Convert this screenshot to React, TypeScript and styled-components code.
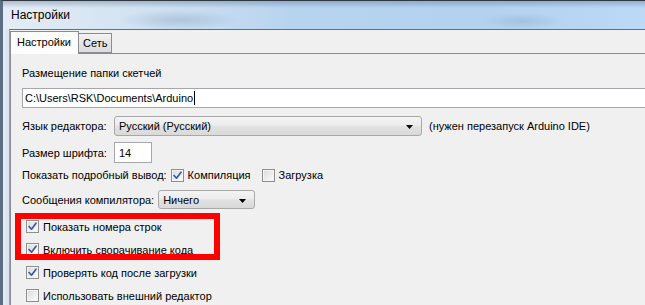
import React from "react";
import styled, {createGlobalStyle} from "styled-components";

const GlobalStyle = createGlobalStyle`
    html, body {
        margin: 0;
        padding: 0;
        background: #f0f0f0;
    }
    body {
        font-family: "Liberation Sans", Arial, sans-serif;
        font-size: 11px;
        color: #000;
    }
`

const CheckMark: React.FunctionComponent = () => (
    <svg width="11" height="11" viewBox="0 0 11 11">
        <path d="M2 5.5 L4.5 8.2 L9 2.2" fill="none" stroke="#3f58a0" strokeWidth="1.7" strokeLinecap="round" strokeLinejoin="round"/>
    </svg>
)

const Arrow: React.FunctionComponent = () => (
    <svg width="7" height="4" viewBox="0 0 7 4">
        <path d="M0 0 H7 L3.5 4 Z" fill="#000"/>
    </svg>
)

const CheckBox: React.FunctionComponent<{checked?: boolean}> = ({checked}) => (
    <Box>{checked && <CheckMark/>}</Box>
)

export default function App() {
    return (
        <>
            <GlobalStyle/>
            <Window>
                <TitleBar>Настройки</TitleBar>
                <Body>
                    <Frame/>
                    <Client>
                        <TabStrip>
                            <Tab $active>Настройки</Tab>
                            <Tab>Сеть</Tab>
                        </TabStrip>
                        <Panel>
                            <SectionLabel>Размещение папки скетчей</SectionLabel>
                            <PathInput>
                                C:\Users\RSK\Documents\Arduino<Caret/>
                            </PathInput>
                            <Row $top={8} $height={20}>
                                <Label $width={92}>Язык редактора:</Label>
                                <Select $width={308}>
                                    Русский (Русский)
                                    <Arrow/>
                                </Select>
                                <Note>(нужен перезапуск Arduino IDE)</Note>
                            </Row>
                            <Row $top={6} $height={21}>
                                <Label $width={92}>Размер шрифта:</Label>
                                <SmallInput>14</SmallInput>
                            </Row>
                            <Row $top={2} $height={20}>
                                <Label>Показать подробный вывод:</Label>
                                <Inline $left={4}>
                                    <CheckBox checked/>
                                    Компиляция
                                </Inline>
                                <Inline $left={11}>
                                    <CheckBox/>
                                    Загрузка
                                </Inline>
                            </Row>
                            <Row $top={5} $height={19}>
                                <Label>Сообщения компилятора:</Label>
                                <Select $width={97} $left={4}>
                                    Ничего
                                    <Arrow/>
                                </Select>
                            </Row>
                            <CheckList>
                                <Highlight>
                                    <CheckRow>
                                        <CheckBox checked/>
                                        Показать номера строк
                                    </CheckRow>
                                    <CheckRow>
                                        <CheckBox checked/>
                                        Включить сворачивание кода
                                    </CheckRow>
                                </Highlight>
                                <CheckRow>
                                    <CheckBox checked/>
                                    Проверять код после загрузки
                                </CheckRow>
                                <CheckRow>
                                    <CheckBox/>
                                    Использовать внешний редактор
                                </CheckRow>
                            </CheckList>
                        </Panel>
                    </Client>
                </Body>
            </Window>
        </>
    )
}

const Window = styled.div`
    width: 645px;
    height: 305px;
    overflow: hidden;
    display: flex;
    flex-direction: column;
    background: #f0f0f0;
`
const TitleBar = styled.div`
    height: 29px;
    flex: none;
    box-sizing: border-box;
    display: flex;
    align-items: center;
    padding: 0 0 1px 8px;
    border-top: 1px solid #2f3742;
    border-left: 3px solid #5b6e84;
    font-size: 12px;
    color: #000;
    background:
        linear-gradient(to bottom, rgba(70, 95, 125, 0.35) 0, rgba(70, 95, 125, 0) 7px),
        radial-gradient(ellipse 60px 10px at 175px 19px, rgba(120, 150, 180, 0.35), rgba(120, 150, 180, 0)),
        radial-gradient(ellipse 40px 8px at 520px 20px, rgba(110, 140, 170, 0.25), rgba(110, 140, 170, 0)),
        linear-gradient(to right, #e4edf6 0, #d3e3f2 20%, #b7d4ef 45%, #b2d2f0 75%, #bcd9f6 100%);
`
const Body = styled.div`
    flex: 1;
    display: flex;
    flex-direction: row;
    min-height: 0;
`
const Frame = styled.div`
    width: 9px;
    flex: none;
    box-sizing: border-box;
    border-left: 3px solid #5b6e84;
    background: linear-gradient(to right, #e6edf4, #d6e2ee);
`
const Client = styled.div`
    flex: 1;
    display: flex;
    flex-direction: column;
    border-top: 1px solid #646f7b;
    border-left: 1px solid #9aa4ae;
    background: #f0f0f0;
    padding-top: 1px;
    min-width: 0;
`
const TabStrip = styled.div`
    display: flex;
    flex-direction: row;
    align-items: flex-end;
    height: 22px;
    position: relative;
    z-index: 1;
`
const Tab = styled.div<{$active?: boolean}>`
    box-sizing: border-box;
    height: ${({$active}) => $active ? 23 : 20}px;
    margin-bottom: ${({$active}) => $active ? -1 : 0}px;
    padding: ${({$active}) => $active ? "4px 7px 0 6px" : "3px 4px 0 4px"};
    border: 1px solid #898c95;
    border-bottom: ${({$active}) => $active ? "none" : "1px solid #898c95"};
    border-left: ${({$active}) => $active ? "1px solid #898c95" : "none"};
    background: ${({$active}) => $active ? "#fcfcfc" : "linear-gradient(to bottom, #f3f3f3, #e6e6e6 50%, #dcdcdc)"};
`
const Panel = styled.div`
    flex: 1;
    display: flex;
    flex-direction: column;
    border-top: 1px solid #898c95;
    border-left: 1px solid #898c95;
    padding: 9px 0 0 11px;
    min-width: 0;
`
const SectionLabel = styled.div`
    height: 20px;
    line-height: 20px;
`
const PathInput = styled.div`
    margin-top: 5px;
    width: 660px;
    height: 20px;
    box-sizing: border-box;
    border: 1px solid #a5a7ad;
    background: #fff;
    padding-left: 2px;
    display: flex;
    align-items: center;
    white-space: nowrap;
`
const Caret = styled.span`
    display: inline-block;
    width: 1px;
    height: 14px;
    background: #000;
    margin-left: 1px;
`
const Row = styled.div<{$top: number; $height: number}>`
    display: flex;
    flex-direction: row;
    align-items: center;
    margin-top: ${({$top}) => $top}px;
    height: ${({$height}) => $height}px;
    white-space: nowrap;
`
const Label = styled.span<{$width?: number}>`
    ${({$width}) => $width ? `width: ${$width}px;` : ""}
    flex: none;
`
const Select = styled.div<{$width: number; $left?: number}>`
    width: ${({$width}) => $width}px;
    height: 100%;
    margin-left: ${({$left}) => $left || 0}px;
    box-sizing: border-box;
    display: flex;
    align-items: center;
    justify-content: space-between;
    padding: 0 8px 0 4px;
    border: 1px solid #a8a8a8;
    border-radius: 3px;
    background: linear-gradient(to bottom, #f4f4f4 0, #ececec 45%, #e1e1e1 55%, #d9d9d9 100%);
    svg {
        margin-top: 2px;
    }
`
const Note = styled.span`
    margin-left: 7px;
`
const SmallInput = styled.div`
    width: 38px;
    height: 100%;
    box-sizing: border-box;
    border: 1px solid #a5a7ad;
    background: #fff;
    padding-left: 4px;
    display: flex;
    align-items: center;
`
const Inline = styled.span<{$left: number}>`
    display: flex;
    flex-direction: row;
    align-items: center;
    gap: 4px;
    margin-left: ${({$left}) => $left}px;
`
const Box = styled.span`
    width: 13px;
    height: 13px;
    flex: none;
    box-sizing: border-box;
    border: 1px solid #8e8f8f;
    box-shadow: inset 0 0 0 1px #f4f4f4;
    background: linear-gradient(135deg, #d9d9d9, #f7f7f7 80%);
    display: flex;
    align-items: center;
    justify-content: center;
`
const CheckList = styled.div`
    display: flex;
    flex-direction: column;
    margin-top: 6px;
`
const Highlight = styled.div`
    position: relative;
    display: flex;
    flex-direction: column;
    &::after {
        content: "";
        position: absolute;
        top: -2px;
        left: -7px;
        width: 205px;
        height: 47px;
        box-sizing: border-box;
        border: 6px solid #ff0000;
        pointer-events: none;
    }
`
const CheckRow = styled.div`
    height: 23px;
    display: flex;
    flex-direction: row;
    align-items: center;
    gap: 4px;
    padding-left: 4px;
    white-space: nowrap;
`
